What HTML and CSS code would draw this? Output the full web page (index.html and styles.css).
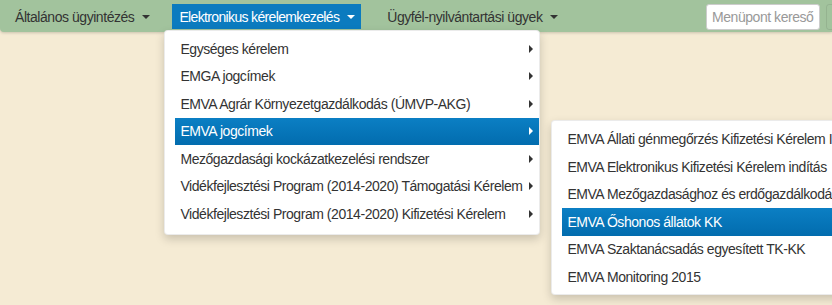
FILE: index.html
```html
<!DOCTYPE html>
<html lang="hu">
<head>
<meta charset="utf-8">
<title>Menü</title>
<link rel="stylesheet" href="styles.css">
</head>
<body>
<nav class="navbar">
  <ul class="nav">
    <li class="nav-item"><a class="nav-link">Általános ügyintézés <span class="caret"></span></a></li>
    <li class="nav-item open">
      <a class="nav-link active">Elektronikus kérelemkezelés <span class="caret"></span></a>
      <ul class="dropdown main-dd">
        <li class="dd-item"><span>Egységes kérelem</span><i class="arrow"></i></li>
        <li class="dd-item"><span>EMGA jogcímek</span><i class="arrow"></i></li>
        <li class="dd-item"><span>EMVA Agrár Környezetgazdálkodás (ÚMVP-AKG)</span><i class="arrow"></i></li>
        <li class="dd-item hl"><span>EMVA jogcímek</span><i class="arrow"></i>
          <ul class="dropdown sub-dd">
            <li class="dd-item"><span>EMVA Állati génmegőrzés Kifizetési Kérelem Indítás</span></li>
            <li class="dd-item"><span>EMVA Elektronikus Kifizetési Kérelem indítás</span></li>
            <li class="dd-item"><span>EMVA Mezőgazdasághoz és erdőgazdálkodáshoz kapcsolódó</span></li>
            <li class="dd-item hl"><span>EMVA Őshonos állatok KK</span></li>
            <li class="dd-item"><span>EMVA Szaktanácsadás egyesített TK-KK</span></li>
            <li class="dd-item"><span>EMVA Monitoring 2015</span></li>
          </ul>
        </li>
        <li class="dd-item"><span>Mezőgazdasági kockázatkezelési rendszer</span><i class="arrow"></i></li>
        <li class="dd-item"><span>Vidékfejlesztési Program (2014-2020) Támogatási Kérelem</span><i class="arrow"></i></li>
        <li class="dd-item"><span>Vidékfejlesztési Program (2014-2020) Kifizetési Kérelem</span><i class="arrow"></i></li>
      </ul>
    </li>
    <li class="nav-item nav-item-last"><a class="nav-link">Ügyfél-nyilvántartási ügyek <span class="caret"></span></a></li>
  </ul>
  <div class="search">
    <input class="search-input" type="text" placeholder="Menüpont kereső">
    <span class="search-btn"></span>
  </div>
</nav>
</body>
</html>
```
FILE: styles.css
```css
* { box-sizing: border-box; }
html, body {
  margin: 0;
  padding: 0;
  height: 100%;
}
body {
  background: #f5ebd4;
  font-family: "Liberation Sans", Arial, sans-serif;
  font-size: 14px;
  letter-spacing: -0.45px;
  color: #333;
  overflow: hidden;
}
.navbar {
  height: 32px;
  background: #a2c39d;
  border-bottom-left-radius: 4px;
  box-shadow: 0 1px 3px rgba(0,0,0,0.18);
  display: flex;
  align-items: center;
  justify-content: space-between;
  position: relative;
  z-index: 1;
}
.nav {
  list-style: none;
  margin: 0;
  padding: 0 0 0 8px;
  display: flex;
  align-items: center;
  gap: 16px;
  height: 100%;
}
.nav-item {
  position: relative;
  height: 100%;
  display: flex;
  align-items: center;
}
.nav-item-last { margin-left: 3px; }
.nav-link {
  display: flex;
  align-items: center;
  height: 25px;
  margin-top: 1px;
  padding: 0 6px 0 7px;
  color: #333;
  white-space: nowrap;
}
.nav-link.active {
  background: #0b7bbf;
  color: #fff;
  letter-spacing: -0.65px;
}
.caret {
  display: inline-block;
  width: 0;
  height: 0;
  margin-left: 8px;
  border-top: 4px solid currentColor;
  border-left: 4px solid transparent;
  border-right: 4px solid transparent;
  margin-top: 1px;
}
.dropdown {
  list-style: none;
  margin: 0;
  padding: 5px 0 5px 10px;
  background: #fff;
  border: 1px solid rgba(0,0,0,0.08);
  border-radius: 4px;
  box-shadow: 0 4px 10px rgba(0,0,0,0.18);
  position: absolute;
  letter-spacing: -0.45px;
}
.main-dd {
  top: 30px;
  left: -8px;
  width: 376px;
  height: 205px;
  padding-top: 4px;
}
.dd-item {
  position: relative;
  height: 27.5px;
  display: flex;
  align-items: center;
  justify-content: space-between;
  padding: 0 6px 0 5px;
  white-space: nowrap;
  color: #333;
}
.dd-item.hl {
  background: linear-gradient(#0b7fc4, #026cae);
  color: #fff;
}
.arrow {
  width: 0;
  height: 0;
  border-left: 4px solid #333;
  border-top: 4px solid transparent;
  border-bottom: 4px solid transparent;
}
.hl > .arrow { border-left-color: #fff; }
.sub-dd {
  top: 2px;
  left: 376px;
  width: 300px;
  height: 175px;
  padding-top: 5px;
  color: #333;
}
.sub-dd .dd-item { color: #333; }
.sub-dd .dd-item.hl { color: #fff; }
.search {
  display: flex;
  align-items: center;
  gap: 6px;
  margin-right: -14px;
}
.search-input {
  width: 114px;
  height: 26px;
  margin-top: 1px;
  border: 1px solid #ccc;
  border-radius: 3px;
  background: #fff;
  padding: 0 5px;
  font-family: "Liberation Sans", Arial, sans-serif;
  font-size: 14px;
  letter-spacing: -0.45px;
  color: #333;
}
.search-input::placeholder { color: #999; }
.search-btn {
  width: 20px;
  height: 26px;
  border: 1px solid rgba(0,0,0,0.08);
  border-radius: 3px;
  margin-top: 1px;
}
```
